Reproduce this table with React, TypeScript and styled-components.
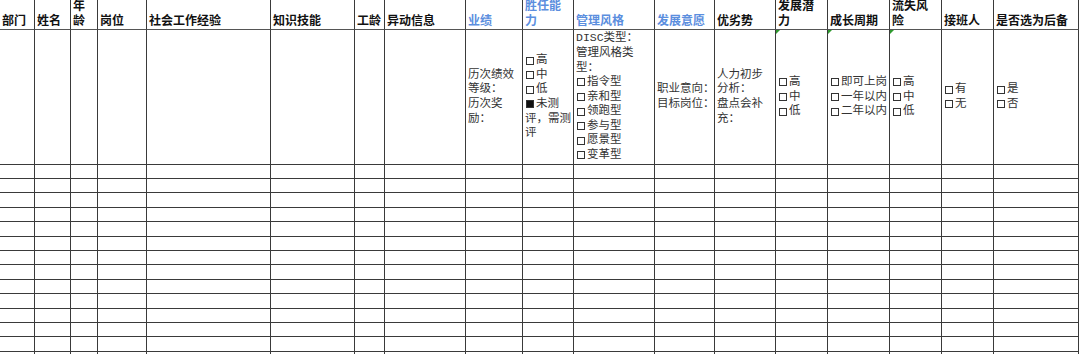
import styled, { createGlobalStyle } from 'styled-components';

const GlobalStyle = createGlobalStyle`
  body {
    margin: 0;
    background: #fff;
  }
`;

const LINE = '#3a3a3a';

type Column = {
  title: string;
  width: number;
  accent?: boolean;
  body?: string[];
  flag?: boolean;
};

const columns: Column[] = [
  { title: '部门', width: 35 },
  { title: '姓名', width: 36 },
  { title: '年\n龄', width: 27 },
  { title: '岗位', width: 49 },
  { title: '社会工作经验', width: 124 },
  { title: '知识技能', width: 84 },
  { title: '工龄', width: 30 },
  { title: '异动信息', width: 81 },
  { title: '业绩', width: 57, accent: true, body: ['历次绩效', '等级：', '历次奖', '励：'] },
  { title: '胜任能\n力', width: 51, accent: true, body: ['□高', '□中', '□低', '■未测', '评，需测', '评'] },
  {
    title: '管理风格',
    width: 81,
    accent: true,
    body: ['DISC类型：', '管理风格类', '型：', '□指令型', '□亲和型', '□领跑型', '□参与型', '□愿景型', '□变革型'],
  },
  { title: '发展意愿', width: 60, accent: true, body: ['职业意向：', '目标岗位：'] },
  { title: '优劣势', width: 61, body: ['人力初步', '分析：', '盘点会补', '充：'] },
  { title: '发展潜\n力', width: 52, body: ['□高', '□中', '□低'], flag: true },
  { title: '成长周期', width: 62, body: ['□即可上岗', '□一年以内', '□二年以内'], flag: true },
  { title: '流失风\n险', width: 52, body: ['□高', '□中', '□低'], flag: true },
  { title: '接班人', width: 52, body: ['□有', '□无'] },
  { title: '是否选为后备', width: 85, body: ['□是', '□否'] },
];

// empty sheet rows under the sample row, heights as rendered (px)
const blankRows = [14, 14, 15, 14, 15, 14, 14, 15, 14, 15, 14, 14, 15, 14];

const Sheet = styled.div<{ $cols: string; $rows: string }>`
  display: grid;
  grid-template-columns: ${(p) => p.$cols};
  grid-template-rows: ${(p) => p.$rows};
  width: 1079px;
  height: 354px;
  overflow: hidden;
`;

const Cell = styled.div`
  box-sizing: border-box;
  border-right: 1px solid ${LINE};
  border-bottom: 1px solid ${LINE};
  min-width: 0;
  overflow: hidden;
`;

const HeadCell = styled(Cell)<{ $accent?: boolean }>`
  display: flex;
  align-items: flex-end;
  padding: 0 0 0 2px;
  border-bottom-color: #555;
  font-family: "Liberation Serif", "Noto Sans CJK SC", serif;
  font-weight: 700;
  font-size: 12px;
  line-height: 15px;
  white-space: pre-line;
  color: ${(p) => (p.$accent ? '#5b8ede' : '#111')};
`;

const DataCell = styled(Cell)<{ $flag?: boolean }>`
  position: relative;
  display: flex;
  flex-direction: column;
  justify-content: center;
  padding-left: 2px;
  font-family: "Liberation Mono", "Noto Sans CJK SC", monospace;
  font-size: 11.5px;
  line-height: 14.6px;
  white-space: pre;
  color: #333;

  &::before {
    content: '';
    display: ${(p) => (p.$flag ? 'block' : 'none')};
    position: absolute;
    top: 0;
    left: 0;
    border-top: 4px solid #2e9a2e;
    border-right: 4px solid transparent;
  }
`;

const Line = styled.div`
  display: flex;
  align-items: center;
`;

const Check = styled.span<{ $filled?: boolean }>`
  box-sizing: border-box;
  width: 8px;
  height: 8px;
  margin: 0 2px 0 1px;
  border: 1px solid #333;
  background: ${(p) => (p.$filled ? '#111' : 'transparent')};
  flex: none;
`;

const CellLine = ({ text }: { text: string }) => {
  const first = text[0];
  if (first === '□' || first === '■') {
    return (
      <Line>
        <Check $filled={first === '■'} />
        {text.slice(1)}
      </Line>
    );
  }
  return <Line>{text}</Line>;
};

const App = () => {
  const cols = columns.map((c) => `${c.width}px`).join(' ');
  const rows = ['30px', '135px', ...blankRows.map((h) => `${h}px`)].join(' ');

  return (
    <>
      <GlobalStyle />
      <Sheet $cols={cols} $rows={rows}>
        {columns.map((c) => (
          <HeadCell key={`h-${c.title}`} $accent={c.accent}>
            {c.title}
          </HeadCell>
        ))}
        {columns.map((c) => (
          <DataCell key={`d-${c.title}`} $flag={c.flag}>
            {c.body?.map((t, i) => <CellLine key={i} text={t} />)}
          </DataCell>
        ))}
        {blankRows.map((_, r) =>
          columns.map((c) => <Cell key={`r${r}-${c.title}`} />),
        )}
      </Sheet>
    </>
  );
};

export default App;
